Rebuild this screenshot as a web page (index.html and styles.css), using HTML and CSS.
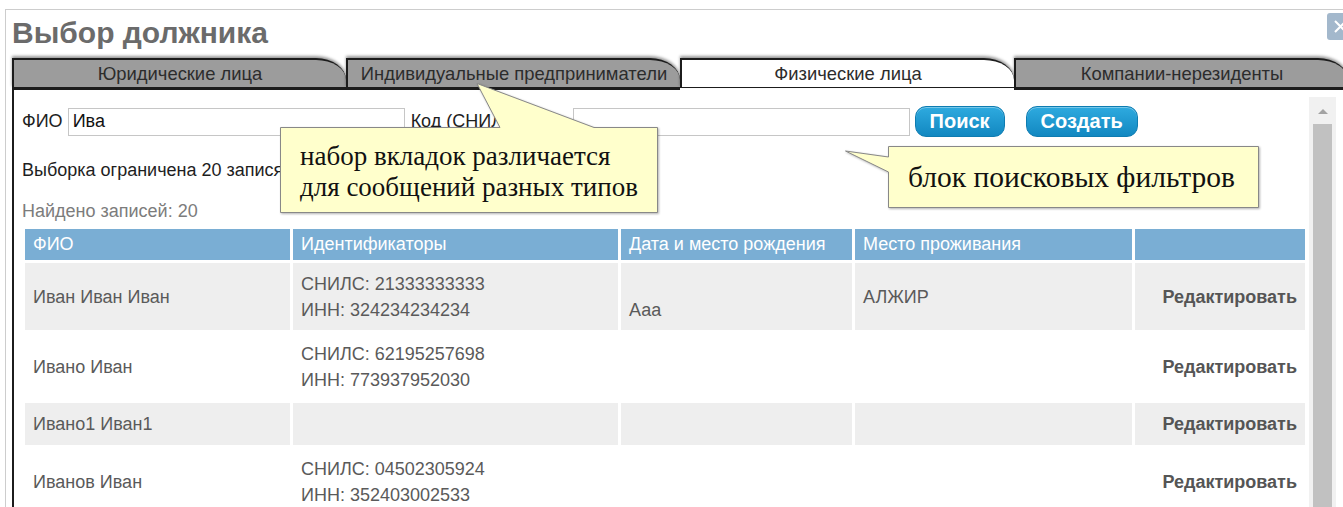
FILE: index.html
```html
<!DOCTYPE html>
<html lang="ru">
<head>
<meta charset="utf-8">
<title>Выбор должника</title>
<link rel="stylesheet" href="styles.css">
</head>
<body>
<div class="dialog">
  <header class="dlg-head">
    <h1 class="dlg-title">Выбор должника</h1>
    <button class="dlg-close" type="button" aria-label="Закрыть">
      <svg width="27" height="27" viewBox="0 0 27 27"><path d="M8 8 L19 19 M19 8 L8 19" stroke="#fff" stroke-width="2" fill="none"/></svg>
    </button>
  </header>

  <nav class="tabs">
    <div class="tab">Юридические лица</div>
    <div class="tab">Индивидуальные предприниматели</div>
    <div class="tab tab-active">Физические лица</div>
    <div class="tab">Компании-нерезиденты</div>
  </nav>

  <section class="panel">
    <div class="panel-body">
      <form class="filters">
        <label class="f-label f-label-name">ФИО</label>
        <input class="f-input" type="text" value="Ива">
        <label class="f-label f-label-code">Код (СНИЛС)</label>
        <input class="f-input" type="text" value="">
        <button class="btn btn-search" type="button">Поиск</button>
        <button class="btn btn-create" type="button">Создать</button>
      </form>

      <p class="limit">Выборка ограничена 20 записями</p>
      <p class="found">Найдено записей: 20</p>

      <table class="results">
        <colgroup>
          <col class="c-name"><col class="c-ids"><col class="c-birth"><col class="c-addr"><col class="c-act">
        </colgroup>
        <thead>
          <tr><th>ФИО</th><th>Идентификаторы</th><th>Дата и место рождения</th><th>Место проживания</th><th></th></tr>
        </thead>
        <tbody>
          <tr class="odd">
            <td>Иван Иван Иван</td>
            <td>СНИЛС: 21333333333<br>ИНН: 324234234234</td>
            <td><span class="date"></span><br>Ааа</td>
            <td>АЛЖИР</td>
            <td class="act">Редактировать</td>
          </tr>
          <tr>
            <td>Ивано Иван</td>
            <td>СНИЛС: 62195257698<br>ИНН: 773937952030</td>
            <td></td>
            <td></td>
            <td class="act">Редактировать</td>
          </tr>
          <tr class="odd">
            <td>Ивано1 Иван1</td>
            <td></td>
            <td></td>
            <td></td>
            <td class="act">Редактировать</td>
          </tr>
          <tr>
            <td>Иванов Иван</td>
            <td>СНИЛС: 04502305924<br>ИНН: 352403002533</td>
            <td></td>
            <td></td>
            <td class="act">Редактировать</td>
          </tr>
        </tbody>
      </table>
    </div>
    <div class="scrollbar">
      <span class="sb-arrow"></span>
      <span class="sb-thumb"></span>
    </div>
  </section>
</div>

<div class="callout callout-tabs">
  <svg class="callout-shape" width="378" height="130" viewBox="0 0 378 130">
    <polygon points="0.5,44.5 220,44.5 197,0.5 314,44.5 377.5,44.5 377.5,129.5 0.5,129.5"/>
  </svg>
  <div class="callout-text">набор вкладок различается<br>для сообщений разных типов</div>
</div>

<div class="callout callout-filters">
  <svg class="callout-shape" width="414" height="62" viewBox="0 0 414 62">
    <polygon points="43.5,0.5 413.5,0.5 413.5,61.5 43.5,61.5 43.5,26 0.5,5 43.5,11"/>
  </svg>
  <div class="callout-text">блок поисковых фильтров</div>
</div>
</body>
</html>
```

FILE: styles.css
```css
html, body {
  margin: 0;
  overflow: hidden;
  background: #fff;
}

body {
  position: relative;
  width: 1343px;
  height: 507px;
  font-family: "Liberation Sans", Arial, sans-serif;
  color: #222;
}

/* dialog frame */
.dialog {
  margin: 9px 0 0 5px;
  padding-left: 6px;
  width: 1336px;
  height: 520px;
  border-top: 1px solid #cdcdcd;
  border-left: 1px solid #cdcdcd;
}

.dlg-head {
  display: flex;
  justify-content: space-between;
  align-items: flex-start;
  height: 48px;
}

.dlg-title {
  margin: 0;
  padding-top: 6px;
  font-size: 30px;
  line-height: 34px;
  font-weight: bold;
  color: #6b6b6b;
}

.dlg-close {
  width: 27px;
  height: 27px;
  margin: 3px -6px 0 0;
  padding: 0;
  border: 0;
  border-radius: 3px;
  background: #a3b8cc;
}

.dlg-close svg {
  display: block;
}

/* tabs */
.tabs {
  display: flex;
  height: 30px;
}

.tab {
  position: relative;
  flex: 0 0 334px;
  box-sizing: border-box;
  height: 30px;
  border: 2px solid #1c1c1c;
  border-right-width: 0;
  border-bottom-width: 1px;
  border-top-right-radius: 30px 22px;
  background: #9c9c9c;
  color: #2c2c2c;
  font-size: 18.4px;
  line-height: 27px;
  text-align: center;
  white-space: nowrap;
  box-shadow: 0 -2px 3px rgba(0, 0, 0, 0.4);
}

.tab:not(.tab-active)::after {
  content: "";
  position: absolute;
  left: -2px;
  right: 0;
  bottom: -3px;
  height: 2px;
  background: #1c1c1c;
}

.tab-active {
  background: #fff;
  z-index: 1;
}

/* tab panel */
.panel {
  display: flex;
  height: 420px;
  border-left: 2px solid #1c1c1c;
}

.panel-body {
  flex: 0 0 1286px;
  padding: 18px 0 0 8px;
}

.filters {
  display: flex;
  align-items: center;
  height: 31px;
  margin: 0;
}

.f-label {
  font-size: 18px;
  color: #1e1e1e;
  white-space: nowrap;
}

.f-label-name {
  margin-right: 5px;
}

.f-label-code {
  width: 162px;
  margin-left: 6px;
  overflow: hidden;
}

.f-input {
  box-sizing: border-box;
  width: 337px;
  height: 28px;
  margin: 0;
  padding: 0 4px;
  border: 1px solid #c6c6c6;
  font-family: "Liberation Sans", Arial, sans-serif;
  font-size: 18px;
  color: #111;
  outline: none;
}

.btn {
  box-sizing: border-box;
  height: 31px;
  padding: 0;
  border: 1px solid #0e7cb1;
  border-radius: 11px;
  background: linear-gradient(#2eaadf, #1288c1);
  box-shadow: inset 0 1px 0 rgba(255, 255, 255, 0.35);
  color: #fff;
  font-family: "Liberation Sans", Arial, sans-serif;
  font-size: 20px;
  font-weight: bold;
}

.btn-search {
  width: 90px;
  margin-left: 5px;
}

.btn-create {
  width: 112px;
  margin-left: 21px;
}

.limit {
  margin: 22px 0 0;
  font-size: 18px;
  line-height: 22px;
  color: #1e1e1e;
}

.found {
  margin: 19px 0 0;
  font-size: 18px;
  line-height: 22px;
  color: #7c7c7c;
}

/* results table */
.results {
  width: 1286px;
  margin-top: 4px;
  table-layout: fixed;
  border-collapse: separate;
  border-spacing: 3px;
  font-size: 18px;
  color: #5a5a5a;
}

.c-name { width: 265px; }
.c-ids { width: 325px; }
.c-birth { width: 231px; }
.c-addr { width: 277px; }
.c-act { width: 170px; }

.results th {
  padding: 2px 8px;
  background: #7aaed4;
  color: #fff;
  font-weight: normal;
  line-height: 27px;
  text-align: left;
  white-space: nowrap;
}

.results td {
  height: 27px;
  padding: 7.5px 8px;
  line-height: 26px;
  vertical-align: middle;
}

.results tr.odd td {
  background: #eeeeee;
}

.results td.act {
  text-align: right;
  font-weight: bold;
  color: #555;
}

/* scrollbar */
.scrollbar {
  display: flex;
  flex: 0 0 27px;
  flex-direction: column;
  align-items: center;
  margin: 9px 0 0 1px;
  background: #f1f1f1;
}

.sb-arrow {
  width: 0;
  height: 0;
  margin-top: 12px;
  border-left: 5px solid transparent;
  border-right: 5px solid transparent;
  border-bottom: 5px solid #a3a3a3;
}

.sb-thumb {
  flex: 1;
  width: 19px;
  margin-top: 10px;
  background: #c1c1c1;
}

/* annotation callouts */
.callout {
  position: absolute;
  box-sizing: border-box;
  font-family: "Liberation Serif", "Times New Roman", serif;
  color: #111;
  white-space: nowrap;
}

.callout-shape {
  position: absolute;
  left: 0;
  top: 0;
  filter: drop-shadow(1px 1px 1px rgba(0, 0, 0, 0.3));
}

.callout-shape polygon {
  fill: #ffffcc;
  stroke: #888;
  stroke-width: 1;
}

.callout-text {
  position: relative;
}

.callout-tabs {
  left: 280px;
  top: 83px;
  width: 378px;
  height: 130px;
  padding: 58px 0 0 20px;
  font-size: 27px;
  line-height: 31px;
}

.callout-filters {
  left: 845px;
  top: 146px;
  width: 414px;
  height: 62px;
  padding: 14px 0 0 63px;
  font-size: 29.5px;
  line-height: 34px;
}
```
